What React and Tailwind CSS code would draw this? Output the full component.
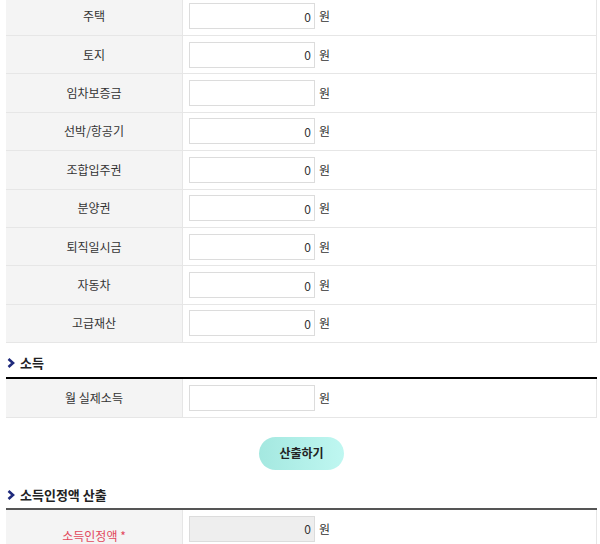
import React from 'react';

const assets = [
  { label: '주택', value: '0' },
  { label: '토지', value: '0' },
  { label: '임차보증금', value: '' },
  { label: '선박/항공기', value: '0' },
  { label: '조합입주권', value: '0' },
  { label: '분양권', value: '0' },
  { label: '퇴직일시금', value: '0' },
  { label: '자동차', value: '0' },
  { label: '고급재산', value: '0' },
];

const Chevron = () => (
  <svg width="8" height="10" viewBox="0 0 8 10" className="mr-[5px] shrink-0">
    <polyline points="1.5,1 6,5 1.5,9" fill="none" stroke="#1f2a7c" strokeWidth="2.6" strokeLinejoin="miter" />
  </svg>
);

const MoneyInput = ({ value, disabled }) => (
  <div className="flex items-center">
    <input
      readOnly
      value={value}
      className={`h-[26px] w-[126px] border border-[#dcdcdc] pr-[3px] text-right text-[12px] text-[#333] outline-none ${disabled ? 'bg-[#eeeeee]' : 'bg-white'}`}
    />
    <span className="ml-[4px] text-[12px] text-[#333]">원</span>
  </div>
);

const Row = ({ label, value }) => (
  <div className="grid h-[38.4px] grid-cols-[177px_1fr] border-b border-r border-[#e6e6e6]">
    <div className="flex items-center justify-center border-r border-[#e6e6e6] bg-[#f4f4f4] text-[12px] text-[#333]">
      {label}
    </div>
    <div className="flex items-center pl-[6px]">
      <MoneyInput value={value} />
    </div>
  </div>
);

const SectionTitle = ({ children, className }) => (
  <div className={`flex h-[20px] items-center pl-[1px] text-[13px] font-bold text-[#222] ${className}`}>
    <Chevron />
    {children}
  </div>
);

export default function App() {
  return (
    <div className="h-[544px] overflow-hidden bg-white font-['Noto_Sans_CJK_KR','Noto_Sans',sans-serif]">
      <div className="ml-[6px] w-[591px] -mt-[2.4px]">
        <div>
          {assets.map((a) => (
            <Row key={a.label} label={a.label} value={a.value} />
          ))}
        </div>

        <SectionTitle className="mt-[10px]">소득</SectionTitle>
        <div className="mt-[4px] border-t-2 border-black">
          <Row label="월 실제소득" value="" />
        </div>

        <div className="flex justify-center pt-[19px]">
          <button className="h-[33px] w-[85px] rounded-full bg-gradient-to-r from-[#a4e8e0] to-[#bff7f1] text-[12px] font-bold text-[#222]">
            산출하기
          </button>
        </div>

        <SectionTitle className="mt-[15px]">소득인정액 산출</SectionTitle>
        <div className="mt-[3px] border-t-2 border-[#555]">
          <div className="grid h-[52px] grid-cols-[177px_1fr] border-r border-[#e6e6e6]">
            <div className="flex items-center justify-center border-r border-[#e6e6e6] bg-[#f4f4f4] text-[12px] text-[#e2485c]">
              소득인정액 *
            </div>
            <div className="pl-[6px] pt-[6px]">
              <MoneyInput value="0" disabled />
            </div>
          </div>
        </div>
      </div>
    </div>
  );
}
